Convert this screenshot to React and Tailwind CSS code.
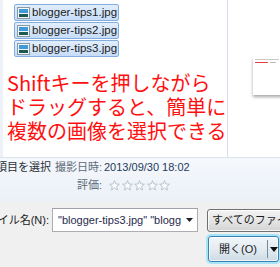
import React from 'react';

const files = ['blogger-tips1.jpg', 'blogger-tips2.jpg', 'blogger-tips3.jpg'];

const ImageIcon = () => (
  <svg width="13" height="12" viewBox="0 0 13 12" className="shrink-0">
    <rect x="0.5" y="0.5" width="12" height="11" fill="#f4f6f8" stroke="#8a97a5" />
    <rect x="2" y="2" width="9" height="4" fill="#3f9ad6" />
    <rect x="2" y="6" width="9" height="1" fill="#e8f4fb" />
    <rect x="2" y="7" width="9" height="3" fill="#1d5a54" />
  </svg>
);

const Star = () => (
  <svg width="11" height="11" viewBox="0 0 12 12">
    <polygon
      points="6,0.8 7.5,4.3 11.3,4.6 8.4,7.1 9.3,10.9 6,8.9 2.7,10.9 3.6,7.1 0.7,4.6 4.5,4.3"
      fill="#f9fbfd"
      stroke="#aeb8c4"
      strokeWidth="0.9"
      strokeLinejoin="round"
    />
  </svg>
);

const App = () => {
  return (
    <div className="w-[280px] h-[267px] overflow-hidden bg-[#f0f0f0] flex flex-col font-[family-name:'Liberation_Sans','Noto_Sans_CJK_JP',sans-serif] text-[11px]">
      {/* File list pane */}
      <div className="h-[157px] shrink-0 flex bg-white">
        <div className="w-[3px] shrink-0 bg-[#edf2f9]" />
        <div className="w-[224px] shrink-0 pl-[11px] pt-[4px] flex flex-col">
          <div className="flex flex-col gap-[1px]">
            {files.map((name) => (
              <div
                key={name}
                className="w-[105px] h-[17px] flex items-center gap-[2px] pl-[2px] rounded-[2px] border border-[#84acdd] bg-gradient-to-b from-[#e1eefc] to-[#c6ddf8] text-[#1b1b1b] text-[11.5px] leading-none"
              >
                <ImageIcon />
                <span className="whitespace-nowrap">{name}</span>
              </div>
            ))}
          </div>
          <div className="mt-[14px] -ml-[7px] whitespace-nowrap text-[20px] leading-[24px] text-[#ff1010] font-[family-name:'Noto_Sans_CJK_JP',sans-serif]">
            <div>Shiftキーを押しながら</div>
            <div>ドラッグすると、簡単に</div>
            <div>複数の画像を選択できる</div>
          </div>
        </div>
        <div className="w-px shrink-0 bg-[#d6e0ea]" />
        <div className="flex-1 pt-[57px] pl-[25px] overflow-hidden">
          <div className="w-[32px] h-[38px] bg-white shadow-[0_2px_3px_rgba(0,0,0,0.35)] pt-[2px] pl-[2px] flex flex-col gap-[2px]">
            <div className="h-px w-[24px] bg-[#c9c9c9]" />
            <div className="flex gap-[2px]">
              <div className="h-px w-[13px] bg-[#e04040]" />
              <div className="h-px w-[6px] bg-[#bdbdbd]" />
            </div>
          </div>
        </div>
      </div>

      {/* Details pane */}
      <div className="h-[44px] shrink-0 border-t border-[#dbe3ec] bg-gradient-to-b from-[#f5f8fc] to-[#ebf1f8] flex pt-[1px] leading-[16px]">
        <div className="w-[51px] shrink-0 flex justify-end overflow-hidden">
          <span className="whitespace-nowrap text-[#2a2f38]">3 個の項目を選択</span>
        </div>
        <div className="ml-[7px] flex flex-col gap-[2px]">
          <div className="flex">
            <div className="w-[44px] shrink-0 flex justify-end">
              <span className="whitespace-nowrap text-[#5f6b7a]">撮影日時:</span>
            </div>
            <span className="ml-[2px] whitespace-nowrap text-[#1e395b]">2013/09/30 18:02</span>
          </div>
          <div className="flex items-center">
            <div className="w-[44px] shrink-0 flex justify-end">
              <span className="whitespace-nowrap text-[#5f6b7a]">評価:</span>
            </div>
            <div className="ml-[7px] flex gap-[1.5px]">
              <Star />
              <Star />
              <Star />
              <Star />
              <Star />
            </div>
          </div>
        </div>
      </div>

      {/* File name and buttons */}
      <div className="flex-1 pt-[7px] flex flex-col">
        <div className="flex items-start">
          <div className="w-[49px] h-[24px] shrink-0 flex items-center justify-end overflow-hidden">
            <span className="whitespace-nowrap text-[#1b1b1b]">ファイル名(N):</span>
          </div>
          <div className="ml-[3px] w-[146px] h-[24px] shrink-0 bg-white border border-[#abadb3] border-t-[#9ea3ab] flex items-center pl-[5px] pr-[4px]">
            <span className="flex-1 whitespace-nowrap overflow-hidden text-[#1f2a4d]">"blogger-tips3.jpg" "blogg</span>
            <svg width="7" height="4" viewBox="0 0 7 4" className="shrink-0">
              <polygon points="0,0 7,0 3.5,4" fill="#222" />
            </svg>
          </div>
          <div className="ml-[9px] mt-[1px] w-[84px] h-[23px] shrink-0 rounded-[3px] border border-[#707070] bg-gradient-to-b from-[#f3f3f3] via-[#e6e6e6] to-[#d3d3d3] shadow-[inset_0_0_0_1px_rgba(255,255,255,0.8)] flex items-center pl-[4px]">
            <span className="whitespace-nowrap text-[#1b1b1b]">すべてのファイル</span>
          </div>
        </div>
        <div className="mt-[4px] ml-[208px] w-[71px] h-[26px] shrink-0 rounded-[3px] border border-[#3c7fb1] bg-gradient-to-b from-[#f1f6f9] via-[#e3ecf2] to-[#cddbe5] shadow-[0_0_0_2px_#a8e4f7,inset_0_0_0_1px_rgba(255,255,255,0.7)] flex items-center">
          <span className="w-[58px] text-center whitespace-nowrap text-[#1b1b1b]">開く(O)</span>
          <div className="w-px h-[18px] bg-[#7a8a96]" />
          <svg width="8" height="5" viewBox="0 0 8 5" className="ml-[2px]">
            <polygon points="0,0 8,0 4,5" fill="#111" />
          </svg>
        </div>
      </div>
    </div>
  );
};

export default App;
